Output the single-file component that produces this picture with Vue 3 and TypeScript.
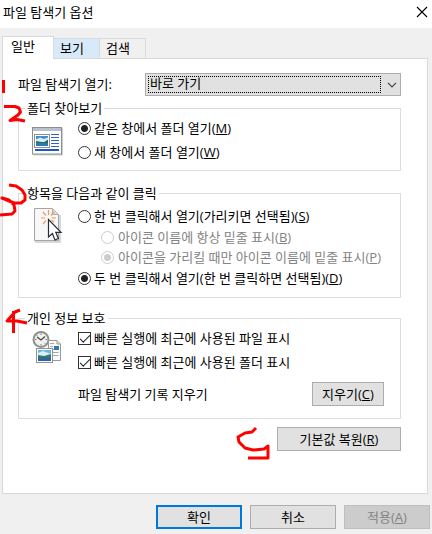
<script setup lang="ts">
import { ref } from 'vue'

interface Tab {
  id: string
  label: string
}

const tabs: Tab[] = [
  { id: 'general', label: '일반' },
  { id: 'view', label: '보기' },
  { id: 'search', label: '검색' },
]
const activeTab = ref('general')
const openTo = ref('quick')
const browse = ref('same')
const click = ref('double')
const underline = ref('hover')
const recentFiles = ref(true)
const recentFolders = ref(true)
</script>

<template>
  <main class="dialog">
    <header class="titlebar">
      <h1>파일 탐색기 옵션</h1>
      <button class="close" type="button" aria-label="닫기">
        <svg viewBox="0 0 12 12" width="12" height="12"><path d="M1 1 11 11M11 1 1 11" fill="none" stroke="#000" stroke-width="1.1" /></svg>
      </button>
    </header>

    <div class="body">
      <div class="tabs" role="tablist">
        <button
          v-for="tab in tabs"
          :key="tab.id"
          type="button"
          role="tab"
          class="tab"
          :class="[tab.id, { active: tab.id === activeTab }]"
          :aria-selected="tab.id === activeTab"
          @click="activeTab = tab.id"
        >{{ tab.label }}</button>
      </div>

      <section class="panel" role="tabpanel">
        <div class="open-row">
          <label for="open-to">파일 탐색기 열기:</label>
          <div class="combo">
            <select id="open-to" v-model="openTo">
              <option value="quick">바로 가기</option>
              <option value="pc">내 PC</option>
            </select>
            <svg class="chevron" viewBox="0 0 10 6" width="10" height="6"><path d="M1 .8 5 4.8 9 .8" fill="none" stroke="#444" stroke-width="1.2" /></svg>
          </div>
        </div>

        <fieldset class="browse">
          <legend>폴더 찾아보기</legend>
          <div class="group">
            <svg class="icon low" viewBox="0 0 32 32" width="32" height="32">
              <rect x="1" y="3" width="30" height="27.5" rx="1" fill="#ccc" />
              <rect x=".5" y="2.5" width="29" height="26.5" fill="#fff" stroke="#8a8f94" />
              <rect x="1" y="3" width="28" height="3" fill="#b9c2ca" />
              <rect x="2.5" y="9.5" width="15" height="13" fill="#fff" stroke="#8d8d8d" />
              <rect x="4" y="11" width="12" height="10" fill="#3c8fd0" />
              <path d="M4 14.5 8 12.5 12 14 16 12.5V17H4z" fill="#d4eefa" />
              <path d="M4 16 8 16.8 12 17.2 16 14.5V18.500H4z" fill="#2b6d4d" />
              <path d="M4 18.500H16V21H4z" fill="#2b78b8" />
              <path d="M19 9.500H27M19 12.500H27M19 15.500H27M19 18.500H27M19 21.500H27" stroke="#2f62c4" />
              <path d="M3 25H27" stroke="#2457bd" stroke-width="2" />
            </svg>
            <div class="choices roomy">
              <label class="choice"><input v-model="browse" type="radio" name="browse" value="same"><span>같은 창에서 폴더 열기(<u>M</u>)</span></label>
              <label class="choice"><input v-model="browse" type="radio" name="browse" value="new"><span>새 창에서 폴더 열기(<u>W</u>)</span></label>
            </div>
          </div>
        </fieldset>

        <fieldset class="clicks">
          <legend>항목을 다음과 같이 클릭</legend>
          <div class="group">
            <svg class="icon" viewBox="0 0 32 36" width="32" height="36">
              <path d="M3 35H28V8" fill="none" stroke="#ccc" stroke-width="1.500" />
              <path d="M2.500 1.500H20.500L26.500 7.500V33.500H2.500z" fill="#f7f7f7" stroke="#a5a5a5" />
              <path d="M20.500 1.500V7.500H26.500z" fill="#dedede" stroke="#b2b2b2" />
              <g stroke="#f39a5b" stroke-width="1.200" fill="none">
                <path d="M16.500 8V3M19 8.500 22 5M19.500 11H24M14 8.500 11 5M13 11H9M14 13.500 11 17M19.500 13 22 15" />
              </g>
              <path d="M16.500 12.500V30L20.400 26.500 23 33 26.400 31.500 23.800 25.300H29z" fill="#fff" stroke="#252b3c" stroke-width="1.200" />
            </svg>
            <div class="choices">
              <label class="choice"><input v-model="click" type="radio" name="click" value="single"><span>한 번 클릭해서 열기(가리키면 선택됨)(<u>S</u>)</span></label>
              <div class="nested">
                <label class="choice off"><input v-model="underline" type="radio" name="underline" value="always" disabled><span>아이콘 이름에 항상 밑줄 표시(<u>B</u>)</span></label>
                <label class="choice off"><input v-model="underline" type="radio" name="underline" value="hover" disabled><span>아이콘을 가리킬 때만 아이콘 이름에 밑줄 표시(<u>P</u>)</span></label>
              </div>
              <label class="choice"><input v-model="click" type="radio" name="click" value="double"><span>두 번 클릭해서 열기(한 번 클릭하면 선택됨)(<u>D</u>)</span></label>
            </div>
          </div>
        </fieldset>

        <fieldset class="privacy">
          <legend>개인 정보 보호</legend>
          <div class="group">
            <svg class="icon mid" viewBox="0 0 32 32" width="32" height="32">
              <circle cx="9" cy="8.500" r="7.500" fill="#f1f1ef" stroke="#8f9190" stroke-width="2" />
              <path d="M9 2.500V4M9 13V14.500M3 8.500H4.500M13.500 8.500H15M4.800 4.300 5.600 5.100M12.400 11.900 13.200 12.700" stroke="#777" />
              <path d="M5 6 9 9 13 5.500" fill="none" stroke="#444" stroke-width="1.200" />
              <path d="M16.500 9.500H25L28.500 13V29.500H16.500z" fill="#fafafa" stroke="#999" />
              <path d="M25 9.500V13H28.500" fill="#ddd" stroke="#999" />
              <path d="M18 12.500H22M18 21.500H26.500M18 24.500H26.500M18 18.500H22M18 15.500H21" stroke="#a0a8b0" />
              <rect x="22" y="15" width="5" height="4" fill="#3578a8" />
              <rect x="4.500" y="17.500" width="16" height="14" fill="#fff" stroke="#929292" />
              <rect x="6" y="19" width="13" height="11" fill="#6db5e4" />
              <path d="M6 22 11 20 19 23V26H6z" fill="#d7effb" />
              <path d="M6 24 12 25 19 23V27H6z" fill="#3d795c" />
              <path d="M6 26.500H19V30H6z" fill="#2866a8" />
            </svg>
            <div class="choices roomy">
              <label class="choice"><input v-model="recentFiles" type="checkbox"><span>빠른 실행에 최근에 사용된 파일 표시</span></label>
              <label class="choice"><input v-model="recentFolders" type="checkbox"><span>빠른 실행에 최근에 사용된 폴더 표시</span></label>
            </div>
          </div>
          <div class="clear-row">
            <span>파일 탐색기 기록 지우기</span>
            <button class="btn small" type="button">지우기(<u>C</u>)</button>
          </div>
        </fieldset>

        <div class="restore-row">
          <button class="btn wide" type="button">기본값 복원(<u>R</u>)</button>
        </div>
      </section>
    </div>

    <footer class="actions">
      <button class="btn primary" type="button">확인</button>
      <button class="btn" type="button">취소</button>
      <button class="btn" type="button" disabled>적용(<u>A</u>)</button>
    </footer>

    <svg class="marks" viewBox="0 0 432 534" width="432" height="534" aria-hidden="true">
      <g fill="none" stroke="#f00" stroke-width="3" stroke-linejoin="round">
        <path d="M3.500 80V93" />
        <path d="M4 106.500H15L19 108 20.500 112 18 115 10 120.500 17 119.500 25 121" />
        <path d="M9 185 16 186 22 190 25 195 25 200 21 203 14 203 2 198 9 200 14 205 15 211 12 214 0 215" />
        <path d="M20 310 15 312 7 321 17 321 27 323M13.500 311V333" />
        <path d="M256 428 252 432 245 433 238 437 239 442 245 448 253 450 264 449 268 446V458H248" />
      </g>
    </svg>
  </main>
</template>

<style>
body {
  margin: 0;
  background: #f0f0f0;
}
</style>

<style scoped>
.dialog {
  position: relative;
  font-family: "Open Sans", "Noto Sans CJK KR", sans-serif;
  font-size: 13px;
  line-height: 19px;
  color: #000;
  background: #f0f0f0;
}
.dialog * {
  box-sizing: border-box;
}
button,
select {
  font: inherit;
  color: inherit;
}
u {
  text-underline-offset: 1px;
}
.titlebar {
  display: flex;
  justify-content: space-between;
  align-items: center;
  height: 28px;
  padding: 0 4px 4px 3px;
  background: #fff;
}
h1 {
  margin: 0;
  font-size: 13px;
  font-weight: 400;
}
.close {
  display: flex;
  padding: 0;
  border: 0;
  background: none;
}
.body {
  padding: 8px 4px 0 2px;
}
.tabs {
  display: flex;
  align-items: flex-end;
  height: 22px;
}
.tab {
  width: 46px;
  height: 20px;
  padding: 0 0 0 6px;
  border: 1px solid #d9d9d9;
  border-width: 1px 1px 0 0;
  background: #f0f0f0;
  text-align: left;
  white-space: nowrap;
}
.tab.view {
  background: #d8eaf9;
}
.tab.active {
  position: relative;
  z-index: 1;
  width: 52px;
  height: 23px;
  margin-bottom: -1px;
  padding: 0 0 3px 8px;
  border-left-width: 1px;
  background: #fff;
}
.panel {
  padding: 14px 26px 42px 15px;
  border: 1px solid #d9d9d9;
  background: #fff;
}
.open-row {
  display: flex;
  align-items: center;
  justify-content: space-between;
  margin-bottom: 3px;
}
.combo {
  position: relative;
  width: 256px;
}
.combo::after {
  content: "";
  position: absolute;
  inset: 3px 20px 3px 3px;
  border: 1px dotted #000;
  pointer-events: none;
}
.chevron {
  position: absolute;
  right: 4px;
  top: 9px;
  pointer-events: none;
}
select {
  display: block;
  appearance: none;
  width: 100%;
  height: 23px;
  padding: 0 20px 2px 4px;
  border: 1px solid #adadad;
  border-radius: 0;
  background: #e1e1e1;
  line-height: 19px;
}
fieldset {
  min-width: 0;
  margin: 0;
  border: 1px solid #dcdcdc;
}
legend {
  height: 19px;
  margin-left: -7px;
  padding: 0 2px;
}
.browse {
  margin-bottom: 13px;
  padding: 0 0 7px 13px;
}
.clicks {
  margin-bottom: 11px;
  padding: 4px 0 9px 13px;
}
.privacy {
  padding: 0 16px 12px 13px;
}
.group {
  display: flex;
  align-items: flex-start;
  gap: 14px;
}
.icon {
  flex: none;
  display: block;
}
.icon.low {
  margin-top: 7px;
}
.icon.mid {
  margin-top: 3px;
}
.choices {
  display: flex;
  flex-direction: column;
  gap: 2px;
  white-space: nowrap;
}
.choices.roomy {
  gap: 5px;
  padding: 1px 0;
}
.nested {
  display: flex;
  flex-direction: column;
  gap: 1px;
  padding-left: 23px;
}
.choice {
  display: flex;
  align-items: center;
  gap: 3px;
  height: 19px;
}
.choice.off {
  gap: 4px;
  color: #838383;
}
input {
  appearance: none;
  flex: none;
  width: 13px;
  height: 13px;
  margin: 0;
  border: 1px solid #333;
  background: #fff;
  color: #222;
}
input[type="radio"] {
  border-radius: 50%;
}
input[type="radio"]:checked {
  background: radial-gradient(circle, currentColor 3px, #fff 4px);
}
input:disabled {
  border-color: #ccc;
  color: #ccc;
}
input[type="checkbox"]:checked::after {
  content: "";
  display: block;
  width: 9px;
  height: 4px;
  margin: 2px 0 0 1px;
  border: solid #222;
  border-width: 0 0 1px 1px;
  transform: rotate(-45deg);
}
.clear-row {
  display: flex;
  align-items: center;
  justify-content: space-between;
  margin-top: 9px;
  padding-left: 46px;
}
.restore-row {
  display: flex;
  justify-content: flex-end;
  margin-top: 8px;
}
.btn {
  width: 86px;
  height: 24px;
  padding: 0;
  border: 1px solid #adadad;
  background: #e1e1e1;
  line-height: 19px;
}
.btn.small {
  width: 72px;
}
.btn.wide {
  width: 124px;
}
.btn.primary {
  border: 2px solid #0078d7;
}
.btn:disabled {
  border-color: #bfbfbf;
  background: #ccc;
  color: #838383;
}
.actions {
  display: flex;
  justify-content: flex-end;
  gap: 8px;
  padding: 11px 2px 5px;
}
.marks {
  position: absolute;
  top: 0;
  left: 0;
  pointer-events: none;
}
</style>
